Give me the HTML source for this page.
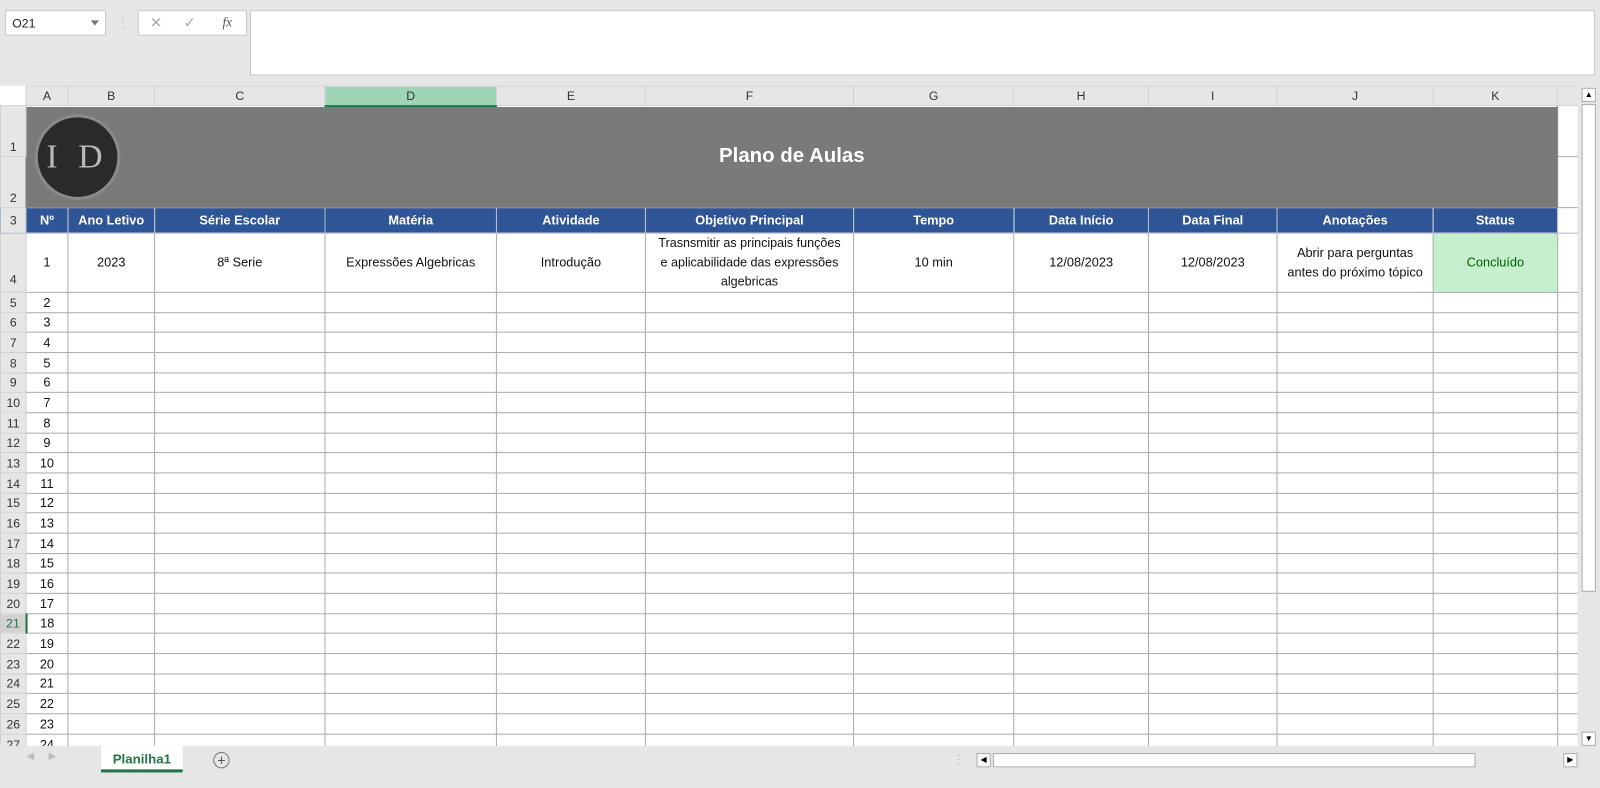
<!DOCTYPE html>
<html><head><meta charset="utf-8"><style>
*{margin:0;padding:0;box-sizing:border-box}
body{width:1600px;height:772px;background:#e6e6e6;font-family:"Liberation Sans",sans-serif;position:relative;overflow:hidden}
#w{position:absolute;left:0;top:0;width:1568px;height:757px;transform:scale(1.0204);transform-origin:0 0}
.nb{position:absolute;left:5px;top:10px;width:99px;height:25px;background:#fff;border:1px solid #c6c6c6;font-size:12px;padding:5px 6px;color:#222}
.nb:after{content:"";position:absolute;right:6px;top:9px;border:4px solid transparent;border-top:5px solid #777}
.fx{position:absolute;left:135px;top:10px;width:107px;height:25px;background:#fff;border:1px solid #c6c6c6;color:#aaa;font-size:14px}
.fb{position:absolute;left:245px;top:10px;width:1318px;height:64px;background:#fff;border:1px solid #c6c6c6}
table{position:absolute;left:0;top:84px;border-collapse:collapse;table-layout:fixed;font-size:12.5px;background:#fff}
td{border:1px solid #ababab;text-align:center;overflow:hidden;white-space:nowrap;color:#111;padding:0}
tr.ch td{background:#e6e6e6;border-color:#d0d0d0;height:19px;color:#333;font-size:12px}
td.rh{background:#e6e6e6;border-color:#d0d0d0;color:#333;font-size:12px;text-align:center}
tr.hd td{background:#2f5597;color:#fff;font-weight:bold;border-color:#b0b8c8}
tr.hd td.rh{background:#e6e6e6;color:#333;font-weight:normal}
td.e{border-right-color:#d4d4d4;border-left-color:#ababab}
</style></head><body><div id="w">
<div class="nb">O21</div>
<div style="position:absolute;left:119px;top:15px;color:#aaa;font-size:10px;line-height:5px">·<br>·<br>·</div>
<div class="fx"><span style="position:absolute;left:11px;top:3px">✕</span><span style="position:absolute;left:44px;top:3px">✓</span><span style="position:absolute;left:82px;top:3px;font-family:'Liberation Serif',serif;font-style:italic;color:#555;font-size:13px">fx</span></div>
<div class="fb"></div>
<div style="position:absolute;left:0;top:84px;width:25px;height:19px;background:#e6e6e6"><div style="position:absolute;right:3px;bottom:3px;border-left:12px solid transparent;border-bottom:12px solid #b5b5b5"></div></div>
<table>
<colgroup><col style="width:25px"><col style="width:41px"><col style="width:85px"><col style="width:167px"><col style="width:168px"><col style="width:146px"><col style="width:204px"><col style="width:157px"><col style="width:132px"><col style="width:126px"><col style="width:153px"><col style="width:122px"><col style="width:20px"></colgroup>
<tr class="ch"><td style="background:transparent;border:none"></td><td>A</td><td>B</td><td>C</td><td style="background:#9fd5b7;border-bottom:2px solid #217346">D</td><td>E</td><td>F</td><td>G</td><td>H</td><td>I</td><td>J</td><td>K</td><td></td></tr>
<tr style="height:50px"><td class="rh" style="vertical-align:bottom;padding-bottom:2px">1</td><td colspan="11" rowspan="2" style="background:#7a7a7a;border-color:#7a7a7a;position:relative;color:#fff;font-weight:bold;font-size:20px">Plano de Aulas
<div style="position:absolute;left:11px;top:10px;width:78px;height:78px;border-radius:50%;background:#2a2a2a;box-shadow:0 0 0 3px #8a8a8a;font-family:'Liberation Serif',serif;font-weight:normal;color:#bbb;font-size:33px;line-height:78px;letter-spacing:6px;text-align:center">I D</div></td><td class="e"></td></tr>
<tr style="height:50px"><td class="rh" style="vertical-align:bottom;padding-bottom:2px">2</td><td class="e"></td></tr>
<tr class="hd" style="height:25px"><td class="rh">3</td><td>Nº</td><td>Ano Letivo</td><td>Série Escolar</td><td>Matéria</td><td>Atividade</td><td>Objetivo Principal</td><td>Tempo</td><td>Data Início</td><td>Data Final</td><td>Anotações</td><td>Status</td><td class="e" style="background:#fff"></td></tr>
<tr style="height:57px;line-height:19px"><td class="rh" style="vertical-align:bottom;padding-bottom:2px">4</td><td>1</td><td>2023</td><td>8ª Serie</td><td>Expressões Algebricas</td><td>Introdução</td><td style="font-size:12.3px">Trasnsmitir as principais funções<br>e aplicabilidade das expressões<br>algebricas</td><td>10 min</td><td>12/08/2023</td><td>12/08/2023</td><td>Abrir para perguntas<br>antes do próximo tópico</td><td style="background:#c6efce;color:#006100">Concluído</td><td class="e"></td></tr>
<tr style="height:20px"><td class="rh">5</td><td>2</td><td></td><td></td><td></td><td></td><td></td><td></td><td></td><td></td><td></td><td></td><td class="e"></td></tr>
<tr style="height:19px"><td class="rh">6</td><td>3</td><td></td><td></td><td></td><td></td><td></td><td></td><td></td><td></td><td></td><td></td><td class="e"></td></tr>
<tr style="height:20px"><td class="rh">7</td><td>4</td><td></td><td></td><td></td><td></td><td></td><td></td><td></td><td></td><td></td><td></td><td class="e"></td></tr>
<tr style="height:20px"><td class="rh">8</td><td>5</td><td></td><td></td><td></td><td></td><td></td><td></td><td></td><td></td><td></td><td></td><td class="e"></td></tr>
<tr style="height:19px"><td class="rh">9</td><td>6</td><td></td><td></td><td></td><td></td><td></td><td></td><td></td><td></td><td></td><td></td><td class="e"></td></tr>
<tr style="height:20px"><td class="rh">10</td><td>7</td><td></td><td></td><td></td><td></td><td></td><td></td><td></td><td></td><td></td><td></td><td class="e"></td></tr>
<tr style="height:20px"><td class="rh">11</td><td>8</td><td></td><td></td><td></td><td></td><td></td><td></td><td></td><td></td><td></td><td></td><td class="e"></td></tr>
<tr style="height:19px"><td class="rh">12</td><td>9</td><td></td><td></td><td></td><td></td><td></td><td></td><td></td><td></td><td></td><td></td><td class="e"></td></tr>
<tr style="height:20px"><td class="rh">13</td><td>10</td><td></td><td></td><td></td><td></td><td></td><td></td><td></td><td></td><td></td><td></td><td class="e"></td></tr>
<tr style="height:20px"><td class="rh">14</td><td>11</td><td></td><td></td><td></td><td></td><td></td><td></td><td></td><td></td><td></td><td></td><td class="e"></td></tr>
<tr style="height:19px"><td class="rh">15</td><td>12</td><td></td><td></td><td></td><td></td><td></td><td></td><td></td><td></td><td></td><td></td><td class="e"></td></tr>
<tr style="height:20px"><td class="rh">16</td><td>13</td><td></td><td></td><td></td><td></td><td></td><td></td><td></td><td></td><td></td><td></td><td class="e"></td></tr>
<tr style="height:20px"><td class="rh">17</td><td>14</td><td></td><td></td><td></td><td></td><td></td><td></td><td></td><td></td><td></td><td></td><td class="e"></td></tr>
<tr style="height:19px"><td class="rh">18</td><td>15</td><td></td><td></td><td></td><td></td><td></td><td></td><td></td><td></td><td></td><td></td><td class="e"></td></tr>
<tr style="height:20px"><td class="rh">19</td><td>16</td><td></td><td></td><td></td><td></td><td></td><td></td><td></td><td></td><td></td><td></td><td class="e"></td></tr>
<tr style="height:20px"><td class="rh">20</td><td>17</td><td></td><td></td><td></td><td></td><td></td><td></td><td></td><td></td><td></td><td></td><td class="e"></td></tr>
<tr style="height:19px"><td class="rh" style="background:#d2d2d2;border-right:2px solid #217346;color:#217346">21</td><td>18</td><td></td><td></td><td></td><td></td><td></td><td></td><td></td><td></td><td></td><td></td><td class="e"></td></tr>
<tr style="height:20px"><td class="rh">22</td><td>19</td><td></td><td></td><td></td><td></td><td></td><td></td><td></td><td></td><td></td><td></td><td class="e"></td></tr>
<tr style="height:20px"><td class="rh">23</td><td>20</td><td></td><td></td><td></td><td></td><td></td><td></td><td></td><td></td><td></td><td></td><td class="e"></td></tr>
<tr style="height:19px"><td class="rh">24</td><td>21</td><td></td><td></td><td></td><td></td><td></td><td></td><td></td><td></td><td></td><td></td><td class="e"></td></tr>
<tr style="height:20px"><td class="rh">25</td><td>22</td><td></td><td></td><td></td><td></td><td></td><td></td><td></td><td></td><td></td><td></td><td class="e"></td></tr>
<tr style="height:20px"><td class="rh">26</td><td>23</td><td></td><td></td><td></td><td></td><td></td><td></td><td></td><td></td><td></td><td></td><td class="e"></td></tr>
<tr style="height:20px"><td class="rh">27</td><td>24</td><td></td><td></td><td></td><td></td><td></td><td></td><td></td><td></td><td></td><td></td><td class="e"></td></tr>
</table>
<div style="position:absolute;left:1546px;top:84px;width:54px;height:688px;background:#e6e6e6"></div>
<div style="position:absolute;left:1550px;top:86px;width:14px;height:14px;border:1px solid #aaa;background:#fff;font-size:8px;text-align:center;line-height:12px">▲</div>
<div style="position:absolute;left:1550px;top:102px;width:14px;height:478px;border:1px solid #aaa;background:#fff"></div>
<div style="position:absolute;left:1550px;top:717px;width:14px;height:14px;border:1px solid #aaa;background:#fff;font-size:8px;text-align:center;line-height:12px">▼</div>
<div style="position:absolute;left:0;top:731px;width:1546px;height:41px;background:#e6e6e6"></div>
<div style="position:absolute;left:26px;top:736px;color:#bbb;font-size:10px">◀&nbsp;&nbsp;&nbsp;&nbsp;&nbsp;▶</div>
<div style="position:absolute;left:99px;top:731px;width:80px;height:26px;background:#fff;border-bottom:3px solid #217346;color:#217346;font-weight:bold;font-size:13px;text-align:center;line-height:26px">Planilha1</div>
<div style="position:absolute;left:209px;top:737px;width:16px;height:16px;border:1px solid #777;border-radius:50%;color:#555;font-size:14px;text-align:center;line-height:14px">+</div>
<div style="position:absolute;left:938px;top:739px;color:#aaa;font-size:10px;line-height:4px">·<br>·<br>·</div>
<div style="position:absolute;left:957px;top:738px;width:14px;height:14px;border:1px solid #aaa;background:#fff;font-size:8px;text-align:center;line-height:12px">◀</div>
<div style="position:absolute;left:973px;top:738px;width:473px;height:14px;border:1px solid #aaa;background:#fff"></div>
<div style="position:absolute;left:1532px;top:738px;width:14px;height:14px;border:1px solid #aaa;background:#fff;font-size:8px;text-align:center;line-height:12px">▶</div>
</div></body></html>
